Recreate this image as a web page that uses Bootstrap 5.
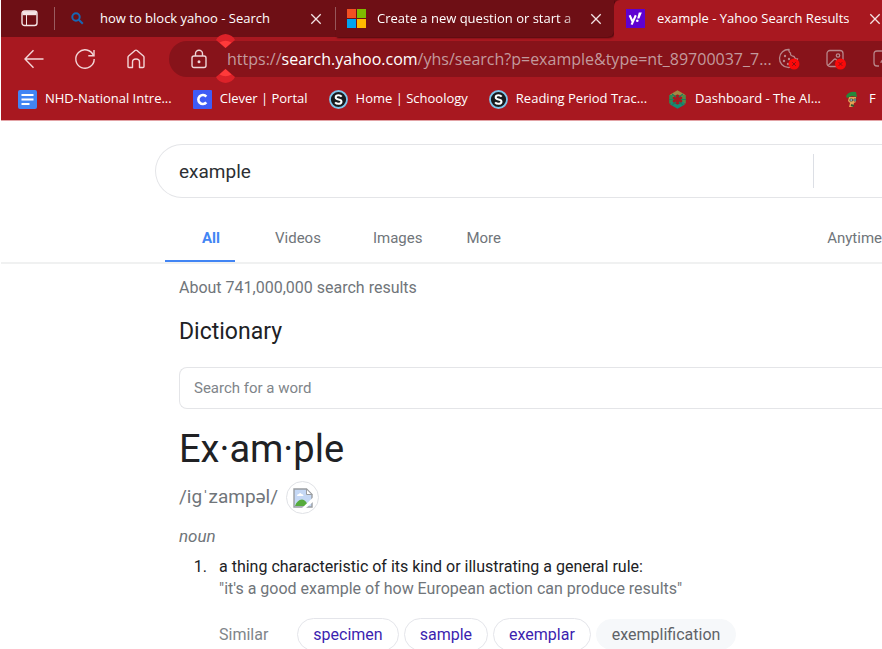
<!DOCTYPE html>
<html lang="en">
<head>
<meta charset="utf-8">
<meta name="viewport" content="width=device-width, initial-scale=1">
<title>example - Yahoo Search Results</title>
<link href="https://cdn.jsdelivr.net/npm/bootstrap@5.3.0/dist/css/bootstrap.min.css" rel="stylesheet">
<style>
  body { font-family: Roboto, sans-serif; font-size: 16px; color: #202124; background: #fff; height: 100vh; overflow: hidden; }
  button { background: none; border: 0; padding: 0; color: inherit; text-align: left; }
  a { text-decoration: none; }
  svg { display: block; flex: none; }

  .browser { margin-left: 1px; background: #a81820; color: #fff; font-family: "Open Sans", "Noto Sans", sans-serif; border-bottom: 1px solid #e3a3a6; }
  .tabstrip { height: 37px; background: #6e0f15; font-size: 13px; padding-left: 20px; }
  .tab-item { flex: none; height: 37px; }
  .tab-item .title { overflow: hidden; }
  .tab-first { width: 280px; padding: 0 13px 0 16px; }
  .tab-second { width: 278px; padding: 0 12px 0 11px; border-bottom-right-radius: 6px; box-shadow: 1px 1px 2px #4a090d; background: #6e0f15; }
  .tab-second .title { width: 206px; margin-left: 11px; -webkit-mask-image: linear-gradient(90deg, #000 90%, transparent); mask-image: linear-gradient(90deg, #000 90%, transparent); }
  .tab-active { flex: 1 0 267px; background: #a81820; border-top-left-radius: 6px; padding: 0 0 0 12px; }
  .tab-corner { background: #a81820; }
  .tab-divider { width: 1px; height: 23px; background: #9a5c60; flex: none; }
  .toolbar { height: 43px; padding-left: 22px; }
  .address { min-width: 0; height: 36px; background: #87131a; border-radius: 18px 0 0 18px; margin-left: 22px; padding-left: 22px; font-size: 16px; color: #c39a9d; }
  .address strong { color: #fff; font-weight: 400; }
  .blocked { gap: 25px; margin-right: -2px; }
  .handle { position: absolute; left: 47px; }
  .handle-top { top: -7px; }
  .handle-bottom { bottom: -6px; }
  .bookmarks { height: 40px; padding: 0 0 2px 17px; font-size: 13px; gap: 21px; }
  .bookmarks a { color: #fff; flex: none; }

  .query { margin: 23px 0 0 155px; height: 54px; border: 1px solid #e4e5e8; border-right: 0; border-radius: 27px 0 0 27px; }
  .query input { border: 0; outline: 0; padding: 0 0 0 23px; font-size: 19px; color: #2c2f33; background: none; }
  .query button { width: 69px; height: 34px; border-left: 1px solid #dcdfe5; }
  .filters { margin-left: 1px; padding-left: 164px; height: 66px; border-bottom: 2px solid #f0f1f1; font-size: 15px; }
  .filters a { color: #70757a; line-height: 24px; padding-bottom: 12px; }
  .filters a.current { color: #4285f4; font-weight: 700; width: 70px; padding-left: 22px; text-align: center; border-bottom: 2px solid #4285f4; padding-bottom: 10px; }

  .results { padding-left: 179px; }
  .count { font-size: 16px; line-height: 24px; color: #70757a; margin: 12px 0 0; }
  .section-title { font-size: 23px; line-height: 32px; margin: 16px 0 0; font-weight: 400; }
  .word-box { height: 42px; margin-top: 19px; border: 1px solid #e4e5e8; border-right: 0; border-radius: 8px 0 0 8px; padding: 0 14px; font-size: 15px; outline: 0; }
  .word-box::placeholder { color: #80858a; opacity: 1; }
  .headword { font-size: 38px; line-height: 48px; margin: 16px 0 0; font-weight: 400; }
  .phonetic { font-size: 19px; color: #70757a; margin-top: 8px; }
  .speaker { width: 33px; height: 33px; border: 1px solid #e0e2e6; border-radius: 50%; }
  .grammar { font-size: 17px; line-height: 24px; color: #70757a; margin: 10px 0 0; }
  .senses { font-size: 16px; line-height: 22px; margin: 8px 0 0; padding-left: 32px; }
  .senses li { padding-left: 8px; }
  .quote { color: #70757a; }
  .similar { margin-top: 18px; gap: 5px; color: #80858a; }
  .chip { height: 33px; border: 1px solid #e4e5ea; border-radius: 17px; padding: 0 15px; color: #3c1fb0; }
  .chip.plain { border-color: #f6f8fa; background: #f6f8fa; color: #5f6368; height: 31px; }
</style>
<script src="https://cdn.jsdelivr.net/npm/bootstrap@5.3.0/dist/js/bootstrap.bundle.min.js"></script>
</head>
<body>
<header class="browser overflow-hidden">
  <div class="tabstrip d-flex align-items-center text-nowrap">
    <button aria-label="Tab actions">
      <svg width="17" height="17" viewBox="0 0 17 17" fill="none" stroke="#f5e4e5" stroke-width="1.4"><rect x="1" y="1" width="15" height="14.5" rx="2.5"/><path d="M1.5 3.2h14" stroke-width="4"/><path d="M5.5 5v10" stroke-width="1"/></svg>
    </button>
    <span class="tab-divider ms-3 me-0"></span>
    <div class="tab-item tab-first d-flex align-items-center">
      <svg width="13" height="13" viewBox="0 0 13 13" fill="none" stroke="#1767b5" stroke-width="2"><circle cx="5" cy="5" r="3.7"/><path d="M7.8 7.8l4 4"/></svg>
      <span class="title ms-3">how to block yahoo - Search</span>
      <button class="ms-auto" aria-label="Close tab"><svg width="12" height="12" viewBox="0 0 12 12" stroke="#f3e2e3" stroke-width="1.3"><path d="M1.3 1.3l9.4 9.4M10.7 1.3l-9.4 9.4"/></svg></button>
    </div>
    <span class="tab-divider"></span>
    <div class="tab-corner"><div class="tab-item tab-second d-flex align-items-center">
      <svg width="19" height="19" viewBox="0 0 19 19"><path fill="#f25022" d="M0 0h9v9H0z"/><path fill="#7fba00" d="M10 0h9v9h-9z"/><path fill="#00a4ef" d="M0 10h9v9H0z"/><path fill="#ffb900" d="M10 10h9v9h-9z"/></svg>
      <span class="title">Create a new question or start a</span>
      <button class="ms-auto" aria-label="Close tab"><svg width="12" height="12" viewBox="0 0 12 12" stroke="#f3e2e3" stroke-width="1.3"><path d="M1.3 1.3l9.4 9.4M10.7 1.3l-9.4 9.4"/></svg></button>
    </div></div>
    <div class="tab-item tab-active d-flex align-items-center">
      <svg width="19" height="19" viewBox="0 0 19 19"><path fill="#5f01d1" d="M0 0h19v19H0z"/><path d="M3.6 6.2l2.8 6M9.8 6.2L5.6 15.6" stroke="#fff" stroke-width="2.1" fill="none"/><path d="M12.8 3.5h3l-2.4 6h-2.2z" fill="#fff"/><circle cx="11.3" cy="11.8" r="1.3" fill="#fff"/></svg>
      <span class="title ms-2 ps-1">example - Yahoo Search Results</span>
      <button class="ms-3 ps-1" aria-label="Close tab"><svg width="12" height="12" viewBox="0 0 12 12" stroke="#f3e2e3" stroke-width="1.3"><path d="M1.3 1.3l9.4 9.4M10.7 1.3l-9.4 9.4"/></svg></button>
    </div>
  </div>

  <div class="toolbar d-flex align-items-center text-nowrap">
    <button aria-label="Back"><svg width="22" height="22" viewBox="0 0 22 22" fill="none" stroke="#f3d6d8" stroke-width="1.4"><path d="M20.500 11H2M10.500 2.200L2 11l8.500 8.800"/></svg></button>
    <button class="ms-4 ps-1" aria-label="Refresh"><svg width="24" height="24" viewBox="0 0 24 24" fill="none" stroke="#f3d6d8" stroke-width="1.400"><path d="M20.500 8.500A9.200 9.200 0 1 0 21.200 12"/><path d="M21 3v5.700h-5.700"/></svg></button>
    <button class="ms-4 ps-1" aria-label="Home"><svg width="22" height="22" viewBox="0 0 22 22" fill="none" stroke="#f3d6d8" stroke-width="1.4" stroke-linejoin="round"><path d="M3 9.300Q3 8.500 3.600 8L10 2.500Q11 1.700 12 2.500L18.400 8Q19 8.500 19 9.300V18.500Q19 19.500 18 19.500H14.500V14Q14.500 11 11 11Q7.500 11 7.500 14V19.500H4Q3 19.500 3 18.500Z"/></svg></button>
    <div class="address position-relative flex-grow-1 d-flex align-items-center">
      <svg width="16" height="20" viewBox="0 0 16 20" fill="none" stroke="#eed5d7" stroke-width="1.400"><rect x="1" y="7" width="14" height="11.500" rx="2"/><path d="M4.500 7V4.800a3.500 3.500 0 0 1 7 0V7"/><circle cx="8" cy="12.800" r=".8" fill="#eed5d7"/></svg>
      <button class="ms-3 ps-1" aria-label="Address">https://<strong>search.yahoo.com</strong>/yhs/search?p=example&amp;type=nt_89700037_7...</button>
      <span class="blocked d-flex align-items-center ms-auto">
        <button aria-label="Cookies blocked"><svg width="22" height="22" viewBox="0 0 22 22" fill="none" stroke="#b9868a" stroke-width="1.300"><path d="M11 1.500A9 9 0 1 0 19.500 11Q17 11.500 16 8.500Q12 8 12.500 5Q10.500 4 11 1.500Z"/><g fill="#b9868a" stroke="none"><circle cx="7" cy="8" r="1.200"/><circle cx="6" cy="13" r="1.200"/><circle cx="11" cy="11" r="1.200"/><circle cx="10" cy="16" r="1.200"/></g><circle cx="16" cy="16" r="5.500" fill="#fb0909" stroke="none"/><path d="M14.200 14.200l3.600 3.600m0-3.600l-3.600 3.600" stroke="#8d1015" stroke-width="1"/></svg></button>
        <button aria-label="Images blocked"><svg width="22" height="22" viewBox="0 0 22 22" fill="none" stroke="#b9868a" stroke-width="1.300"><rect x="2" y="2.500" width="16" height="16" rx="3"/><path d="M3 17.500l6-6q1-1 2 0l3 3"/><circle cx="13" cy="7.500" r="1.700"/><circle cx="15.500" cy="16" r="5.500" fill="#fb0909" stroke="none"/><path d="M13.700 14.200l3.600 3.600m0-3.600l-3.600 3.600" stroke="#8d1015" stroke-width="1"/></svg></button>
        <button aria-label="Reader"><svg width="12" height="20" viewBox="0 0 12 20" fill="none" stroke="#b9868a" stroke-width="1.300"><path d="M12 2H5Q2 2 2 5V14Q2 17 5 17H7"/><path d="M12 11q-3 0-3 3"/></svg></button>
      </span>
      <svg class="handle handle-top" width="19" height="14" viewBox="0 0 19 14"><path d="M0 6Q2 1 9.500 0Q17 1 19 6L9.500 14Z" fill="#dc2229"/><path d="M3.500 8.500Q9.500 5 15.500 8.500L9.500 14Z" fill="#ff3a3a"/></svg>
      <svg class="handle handle-bottom" width="19" height="14" viewBox="0 0 19 14"><path d="M0 8Q2 13 9.500 14Q17 13 19 8L9.500 0Z" fill="#dc2229"/><path d="M3.500 5.500Q9.500 9 15.500 5.500L9.500 0Z" fill="#ff3a3a"/></svg>
    </div>
  </div>

  <nav class="bookmarks d-flex align-items-center text-nowrap" aria-label="Favorites">
    <a href="#" class="d-flex align-items-center gap-2"><svg width="19" height="19" viewBox="0 0 19 19"><rect width="19" height="19" rx="2" fill="#4285f4"/><path d="M3.500 5h12M3.500 9.500h12M3.500 14h8" stroke="#fff" stroke-width="2"/></svg>NHD-National Intre...</a>
    <a href="#" class="d-flex align-items-center gap-2"><svg width="19" height="19" viewBox="0 0 19 19"><rect width="19" height="19" rx="1" fill="#3f5cf5"/><path d="M13.300 6.600a4.500 4.500 0 1 0 0 5.800" fill="none" stroke="#fff" stroke-width="2.600"/></svg>Clever | Portal</a>
    <a href="#" class="d-flex align-items-center gap-2"><svg width="19" height="19" viewBox="0 0 19 19"><circle cx="9.500" cy="9.500" r="8.500" fill="#17191d" stroke="#7fc4ea" stroke-width="1.800"/><path d="M12.700 6.700Q11.500 5.300 9.500 5.300Q6.700 5.300 6.700 7.300Q6.700 9 9.500 9.400Q12.500 9.800 12.500 11.700Q12.500 13.800 9.500 13.800Q7.300 13.800 6.100 12.300" fill="none" stroke="#fff" stroke-width="2"/></svg>Home | Schoology</a>
    <a href="#" class="d-flex align-items-center gap-2"><svg width="19" height="19" viewBox="0 0 19 19"><circle cx="9.500" cy="9.500" r="8.500" fill="#17191d" stroke="#7fc4ea" stroke-width="1.800"/><path d="M12.700 6.700Q11.500 5.300 9.500 5.300Q6.700 5.300 6.700 7.300Q6.700 9 9.500 9.400Q12.500 9.800 12.500 11.700Q12.500 13.800 9.500 13.800Q7.300 13.800 6.100 12.300" fill="none" stroke="#fff" stroke-width="2"/></svg>Reading Period Trac...</a>
    <a href="#" class="d-flex align-items-center gap-2"><svg width="19" height="19" viewBox="0 0 19 19" fill="none" stroke-width="3.600"><path d="M3 6L9.500 2.300L16 6" stroke="#a08a45"/><path d="M3 5v8.500" stroke="#2f8a52"/><path d="M16 5v8.500" stroke="#528a48"/><path d="M3 13L9.500 16.700L16 13" stroke="#158d76"/><path d="M4 4l4 3M15 4l-4 3M4 15l4-3M15 15l-4-3M1 9.500h5M13 9.500h5" stroke="#1b7d5c" stroke-width="1.200"/></svg>Dashboard - The AI...</a>
    <a href="#" class="d-flex align-items-center gap-2"><svg width="19" height="19" viewBox="0 0 19 19"><path d="M7 7h7v5l-2 1-1 4H7l1-4-2-2z" fill="#e5a255"/><path d="M4 6Q7 1 14 2L15 7L10 6L5 8Z" fill="#24883b"/><path d="M8 9h2.500v2H8zM12 9h2v2h-2z" fill="#c3e8e1" stroke="#34444b" stroke-width=".8"/><path d="M9 15l3 1" stroke="#315b32" stroke-width="2"/></svg>F</a>
  </nav>
</header>

<main>
  <form class="query d-flex align-items-center" role="search">
    <input class="flex-grow-1 h-100" type="text" value="example" aria-label="Search the web">
    <button type="button" aria-label="Search"></button>
  </form>
  <nav class="filters d-flex align-items-end" aria-label="Result types">
    <a class="current" href="#">All</a>
    <a class="ms-4 ps-3" href="#">Videos</a>
    <a class="ms-5 ps-1 pe-1" href="#">Images</a>
    <a class="ms-4 ps-3" href="#">More</a>
    <a class="ms-auto" href="#">Anytime</a>
  </nav>

  <section class="results">
    <p class="count">About 741,000,000 search results</p>
    <h2 class="section-title">Dictionary</h2>
    <input class="word-box w-100 d-block" type="text" placeholder="Search for a word" aria-label="Search for a word">
    <h1 class="headword">Ex·am·ple</h1>
    <div class="phonetic d-flex align-items-center gap-2">
      <span>/igˈzampəl/</span>
      <button class="speaker d-flex align-items-center justify-content-center" aria-label="Listen">
        <svg width="20" height="20" viewBox="0 0 20 20"><path d="M1 1h12.500l5.500 5.500V19H1z" fill="#c5d8f5" stroke="#9a9da1" stroke-width="1.400"/><path d="M4 8q0-2 2-2 1-2 2.500 0 2 0 2 2z" fill="#fff"/><path d="M2 18Q4 12 9 11.500Q13 11.500 15 18z" fill="#56ab3d"/><path d="M13.500 1v5.500H19z" fill="#fff" stroke="#9a9da1"/><path d="M20 9.500L9 20h4L20 14z" fill="#fff"/></svg>
      </button>
    </div>
    <p class="grammar fst-italic">noun</p>
    <ol class="senses">
      <li>a thing characteristic of its kind or illustrating a general rule:
        <div class="quote">"it's a good example of how European action can produce results"</div>
        <div class="similar d-flex align-items-center text-nowrap">
          <span class="me-4">Similar</span>
          <a class="chip d-flex align-items-center" href="#">specimen</a>
          <a class="chip d-flex align-items-center" href="#">sample</a>
          <a class="chip d-flex align-items-center" href="#">exemplar</a>
          <span class="chip plain d-flex align-items-center">exemplification</span>
        </div>
      </li>
    </ol>
  </section>
</main>
</body>
</html>
